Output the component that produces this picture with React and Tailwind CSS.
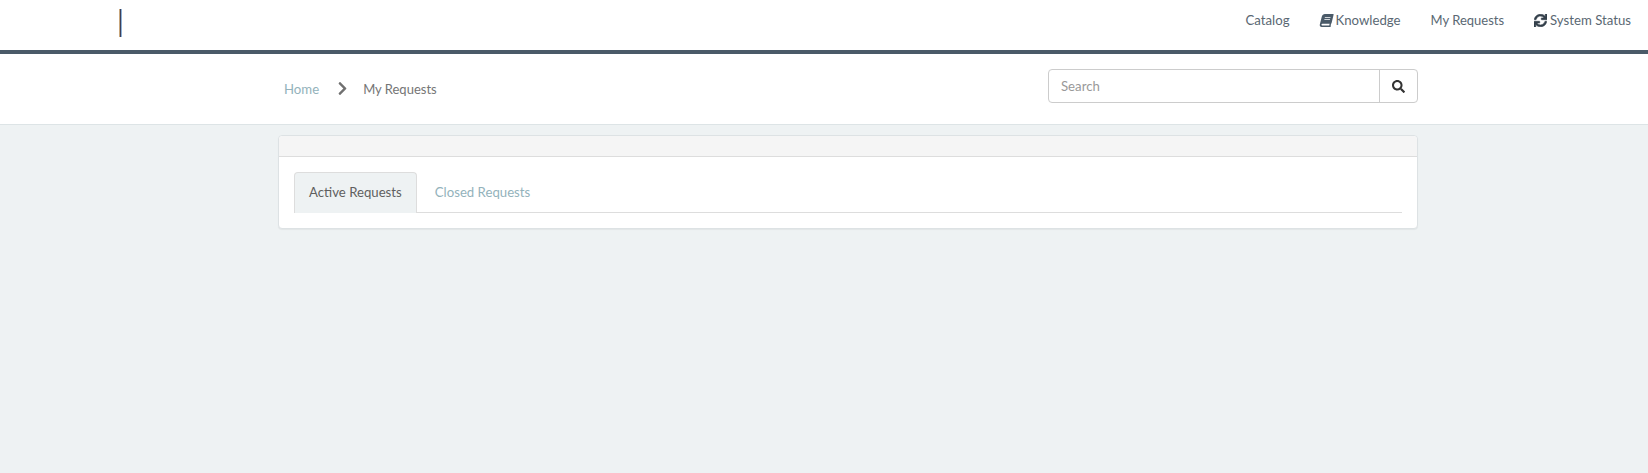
import React from "react";
import { FaBook, FaSync, FaSearch, FaChevronRight } from "react-icons/fa";

const navLink = "flex items-center gap-[3px] text-[#5a6873]";

const App = () => {
  return (
    <div className="min-h-[473px] bg-[#eef2f3] font-['Lato',sans-serif] text-[13.2px]">
      {/* top nav */}
      <header className="flex h-[54px] items-start justify-between border-b-4 border-[#4a5a68] bg-white">
        <div className="ml-[119px] mt-[9px] flex h-[28px] w-[3px]">
          <span className="w-px bg-[#c9a77c]" />
          <span className="w-px bg-[#3a3f5c]" />
          <span className="w-px bg-[#8fb4d9]" />
        </div>
        <nav className="mr-[17px] mt-[11px] flex items-center gap-[30px] leading-[18px]">
          <a className={navLink}>Catalog</a>
          <a className={navLink}>
            <FaBook className="-skew-x-[14deg] text-[13px] text-[#4a5a68]" /> Knowledge
          </a>
          <a className={`${navLink} text-[13px]`}>My Requests</a>
          <a className={navLink}>
            <FaSync stroke="currentColor" strokeWidth={24} className="text-[13px] text-[#333f4a]" /> System Status
          </a>
        </nav>
      </header>

      {/* breadcrumb and search */}
      <div className="h-[71px] border-b border-[#dde4e6] bg-white">
        <div className="ml-[279px] flex w-[1139px] items-start justify-between pl-[5px]">
          <div className="mt-[26px] flex items-center leading-[18px]">
            <a className="text-[#93b2bb]">Home</a>
            <FaChevronRight className="ml-[16px] mr-[13px] -translate-y-px text-[15px] text-[#707070]" />
            <span className="text-[13px] text-[#757575]">My Requests</span>
          </div>
          <div className="mt-[15px] flex h-[34px] w-[370px] rounded border border-[#ccc]">
            <input
              placeholder="Search"
              className="min-w-0 flex-1 px-3 pt-[1px] outline-none placeholder:text-[#999]"
            />
            <button className="flex w-[38px] items-center justify-center border-l border-[#ccc] text-[#333]">
              <FaSearch className="text-[13px]" />
            </button>
          </div>
        </div>
      </div>

      {/* requests panel */}
      <div className="ml-[278px] mt-[10px] w-[1140px] rounded border border-[#dde2e4] bg-white shadow-[0_1px_1px_rgba(0,0,0,0.05)]">
        <div className="h-[21px] rounded-t border-b border-[#dddddd] bg-[#f5f5f5]" />
        <div className="p-[15px]">
          <div className="flex border-b border-[#dddddd]">
            <a className="-mb-px flex h-[41px] items-center rounded-t border border-b-0 border-[#dddddd] bg-[#eef2f3] pb-[1px] pl-[14px] pr-[14px] text-[#5f5f5f]">
              Active Requests
            </a>
            <a className="ml-[2px] flex h-[40px] items-center border border-transparent px-[15px] pt-[1px] text-[#93b2bb]">
              Closed Requests
            </a>
          </div>
        </div>
      </div>
    </div>
  );
};

export default App;
